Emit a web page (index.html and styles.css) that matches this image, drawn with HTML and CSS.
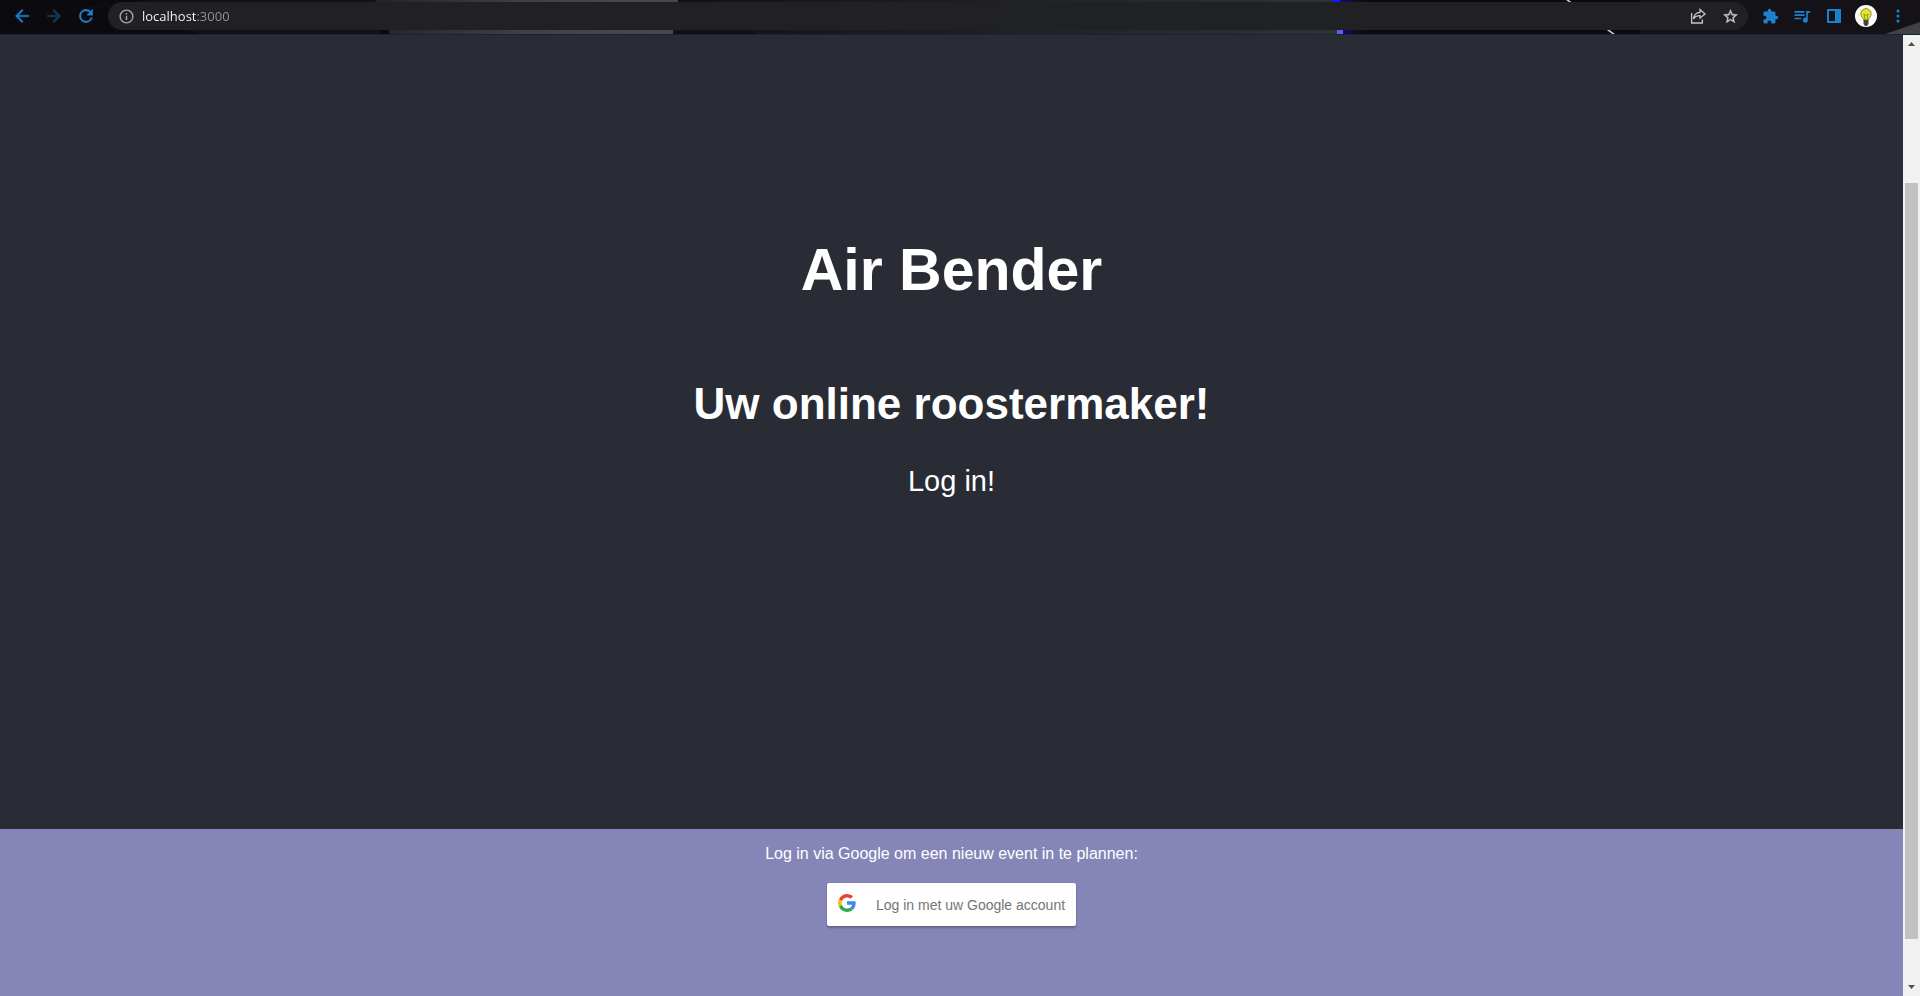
FILE: index.html
```html
<!DOCTYPE html>
<html lang="nl">
<head>
<meta charset="utf-8">
<title>Air Bender</title>
<link rel="stylesheet" href="styles.css">
</head>
<body>
<header class="toolbar">
  <svg class="toolbar-art" viewBox="0 0 1920 34" preserveAspectRatio="none" aria-hidden="true">
    <defs>
      <linearGradient id="left-fade"><stop offset="0" stop-color="#242326"/><stop offset=".5" stop-color="#414141"/><stop offset="1" stop-color="#4a4a4a"/></linearGradient>
      <linearGradient id="mid-fade"><stop offset="0" stop-color="#151517"/><stop offset=".3" stop-color="#1b1b1d"/><stop offset="1" stop-color="#303234"/></linearGradient>
      <linearGradient id="glow"><stop offset="0" stop-color="#1c0a70"/><stop offset="1" stop-color="#0d0c12"/></linearGradient>
    </defs>
    <path fill="#0d0a0d" d="M0 0h1920v34H0z"/>
    <path fill="#151013" d="M0 20 150 0h230v34H200L110 4z"/>
    <path fill="url(#left-fade)" d="M375 0h303l-5 34H390z"/>
    <path fill="#111113" d="M678 0h36l43 34h-84z"/>
    <path fill="url(#mid-fade)" d="M714 0h618l6 34H757z"/>
    <path fill="url(#glow)" d="M1338 0h24v34h-24z"/>
    <path fill="#1717f0" d="M1332 0h8v3h-8z"/>
    <path fill="#5c63e8" d="M1337 29h6v5h-6z"/>
    <path stroke="#d8d8d8" stroke-width="1.5" d="m1566-1 49 36"/>
    <path fill="#141217" d="M1640 0h280v34h-280z"/>
    <path fill="#414043" d="m1885 34 35-12v12z"/>
  </svg>
  <nav class="buttons" aria-label="Navigatie">
    <button class="tool" aria-label="Terug"><svg class="icon icon-bold" viewBox="0 0 24 24"><path d="M20 11H7.830l5.590-5.590L12 4l-8 8 8 8 1.410-1.410L7.830 13H20v-2z"/></svg></button>
    <button class="tool tool-dim" aria-label="Vooruit"><svg class="icon icon-bold" viewBox="0 0 24 24"><path d="m12 4-1.410 1.410L16.170 11H4v2h12.170l-5.580 5.590L12 20l8-8z"/></svg></button>
    <button class="tool" aria-label="Vernieuwen"><svg class="icon icon-bold" viewBox="0 0 24 24"><path d="M17.650 6.350C16.200 4.900 14.210 4 12 4a8 8 0 1 0 7.730 10h-2.080A6 6 0 1 1 12 6c1.660 0 3.140.690 4.220 1.780L13 11h7V4l-2.350 2.350z"/></svg></button>
  </nav>
  <div class="address">
    <button class="mini" aria-label="Site-informatie"><svg class="icon-small" viewBox="0 0 24 24"><path d="M11 7h2v2h-2zm0 4h2v6h-2zm1-9a10 10 0 1 0 0 20 10 10 0 0 0 0-20zm0 18a8 8 0 1 1 0-16 8 8 0 0 1 0 16z"/></svg></button>
    <input class="url" type="text" value="localhost:3000" aria-label="Adres" spellcheck="false">
    <button class="tool tool-light" aria-label="Delen"><svg class="icon" viewBox="0 0 20 20"><path fill="none" stroke="currentColor" stroke-width="1.300" d="M3.600 7v10h10.800v-3.500M5.500 13c.5-4.500 3-6.600 6.500-6.700V3.500L17 8l-5 4.200V9.700c-3-.1-5 .8-6.500 3.300z"/></svg></button>
    <button class="tool tool-light" aria-label="Bladwijzer"><svg class="icon-small icon-bold" viewBox="0 0 24 24"><path d="m22 9.240-7.190-.620L12 2 9.190 8.630 2 9.240l5.460 4.730L5.820 21 12 17.270 18.180 21l-1.630-7.030L22 9.240zM12 15.400l-3.760 2.270 1-4.280-3.320-2.880 4.380-.380L12 6.100l1.710 4.040 4.380.380-3.320 2.880 1 4.280L12 15.400z"/></svg></button>
  </div>
  <div class="buttons">
    <button class="tool" aria-label="Extensies"><svg class="icon-small" viewBox="0 0 24 24"><path d="M20.500 11H19V7a2 2 0 0 0-2-2h-4V3.500a2.500 2.500 0 0 0-5 0V5H4a2 2 0 0 0-2 2v3.800h1.500a2.700 2.700 0 0 1 0 5.400H2V20a2 2 0 0 0 2 2h3.800v-1.500a2.700 2.700 0 0 1 5.400 0V22H17a2 2 0 0 0 2-2v-4h1.500a2.500 2.500 0 0 0 0-5z"/></svg></button>
    <button class="tool" aria-label="Mediabediening"><svg class="icon" viewBox="0 0 24 24"><path d="M15 6H3v2h12V6zm0 4H3v2h12v-2zM3 16h8v-2H3v2zM17 6v8.180A3 3 0 1 0 19 17V8h3V6h-5z"/></svg></button>
    <button class="tool" aria-label="Zijvenster"><svg class="icon" viewBox="0 0 20 20"><path fill-rule="evenodd" d="M3 3h14v14H3zm2 2v10h6V5z"/></svg></button>
    <button class="tool" aria-label="Profiel"><svg class="avatar" viewBox="0 0 22 22">
      <circle cx="11" cy="11" r="11" fill="#fff"/>
      <path fill="none" stroke="#f0ea9a" stroke-width="1" d="M11 1v2M4 4l2 2m12-2-2 2M2 10h2.500m13 0H20M4 16l2-2m12 2-2-2"/>
      <path fill="#dfe62b" stroke="#77791c" stroke-width=".8" d="M8.500 15c0-2-2.700-3.300-2.700-6.200a5.200 5.200 0 0 1 10.400 0c0 2.900-2.700 4.200-2.700 6.200z"/>
      <path fill="none" stroke="#85841b" stroke-width=".8" d="m10 15-1-6 2 1.500L13 9l-1 6"/>
      <path fill="#45443c" d="M8.500 15h5v4l-1.500 2h-2l-1.500-2z"/>
    </svg></button>
    <button class="tool" aria-label="Menu"><svg class="icon" viewBox="0 0 20 20"><circle cx="10" cy="5" r="1.600"/><circle cx="10" cy="10" r="1.600"/><circle cx="10" cy="15" r="1.600"/></svg></button>
  </div>
</header>
<div class="viewport">
  <main class="page">
    <section class="hero">
      <h1 class="title">Air Bender</h1>
      <h2 class="subtitle">Uw online roostermaker!</h2>
      <p class="lead">Log in!</p>
    </section>
    <section class="login">
      <p class="prompt">Log in via Google om een nieuw event in te plannen:</p>
      <button class="google">
        <svg class="google-logo" viewBox="0 0 18 18" aria-hidden="true">
          <path fill="#EA4335" d="M9 3.480c1.690 0 2.830.730 3.480 1.340l2.540-2.480C13.460.890 11.430 0 9 0 5.480 0 2.440 2.020.960 4.960l2.910 2.260C4.600 5.050 6.620 3.480 9 3.480z"/>
          <path fill="#4285F4" d="M17.640 9.200c0-.740-.060-1.280-.190-1.840H9v3.340h4.960c-.100.830-.640 2.080-1.840 2.920l2.840 2.200c1.700-1.570 2.680-3.880 2.680-6.620z"/>
          <path fill="#FBBC05" d="M3.880 10.780A5.540 5.540 0 0 1 3.580 9c0-.620.110-1.220.290-1.780L.960 4.960A9 9 0 0 0 0 9c0 1.450.350 2.820.960 4.040z"/>
          <path fill="#34A853" d="M9 18c2.430 0 4.470-.800 5.960-2.180l-2.840-2.200c-.760.530-1.780.900-3.120.900-2.380 0-4.400-1.570-5.120-3.740L.970 13.040C2.450 15.980 5.480 18 9 18z"/>
        </svg>
        <span>Log in met uw Google account</span>
      </button>
    </section>
  </main>
  <div class="scrollbar" aria-hidden="true">
    <svg class="scroll-arrow" viewBox="0 0 17 17"><path d="M5 11h7L8.500 7z"/></svg>
    <div class="track"><div class="thumb"></div></div>
    <svg class="scroll-arrow" viewBox="0 0 17 17"><path d="M5 6h7l-3.500 4z"/></svg>
  </div>
</div>
</body>
</html>
```
FILE: styles.css
```css
* {
  box-sizing: border-box;
}

body {
  display: flex;
  flex-direction: column;
  height: 100vh;
  margin: 0;
  overflow: hidden;
  background: #292c34;
  color: #fff;
  font-family: "Liberation Sans", Arial, sans-serif;
}

button {
  border: 0;
  padding: 0;
  background: none;
  font-family: inherit;
  cursor: pointer;
}

svg {
  display: block;
  fill: currentColor;
}

/* Browser toolbar */
.toolbar {
  position: relative;
  display: flex;
  align-items: flex-start;
  gap: 6px;
  height: 35px;
  padding: 2px 6px 0;
  border-bottom: 1px solid #0d2a38;
  background: #0d0a0d;
}

.toolbar-art {
  position: absolute;
  inset: 0;
  width: 100%;
  height: 100%;
}

.buttons,
.address {
  position: relative;
  display: flex;
  align-items: center;
  height: 28px;
}

.address {
  flex: 1;
  padding: 0 2px 0 8px;
  border-radius: 14px;
  background: #202124;
}

.tool,
.mini {
  display: grid;
  place-items: center;
  width: 32px;
  height: 28px;
  color: #1c80ca;
}

.mini {
  width: 20px;
  color: #a5a7aa;
}

.tool-dim {
  color: #163c5b;
}

.tool-light {
  color: #c4c6c9;
}

.icon {
  width: 20px;
  height: 20px;
}

.icon-small {
  width: 17px;
  height: 17px;
}

.icon-bold {
  stroke: currentColor;
  stroke-width: 0.5;
}

.avatar {
  width: 22px;
  height: 22px;
}

.url {
  flex: 1;
  min-width: 0;
  height: 28px;
  margin-left: 6px;
  border: 0;
  padding: 0;
  outline: 0;
  background: linear-gradient(to right, #fff 55px, #909397 55px);
  background-clip: text;
  -webkit-background-clip: text;
  -webkit-text-fill-color: transparent;
  color: #fff;
  font-family: "Open Sans", "Noto Sans", sans-serif;
  font-size: 13px;
}

/* Page */
.viewport {
  display: flex;
  flex: 1;
  min-height: 0;
}

.page {
  display: flex;
  flex: 1;
  flex-direction: column;
}

.hero {
  display: flex;
  flex: 1;
  flex-direction: column;
  align-items: center;
  justify-content: center;
  padding-bottom: 130px;
  font-size: 29px;
  text-align: center;
}

.title {
  margin: 0 0 75px;
  font-size: 59px;
}

.subtitle {
  margin: 0 0 36px;
  font-size: 44px;
}

.lead {
  margin: 0;
}

.login {
  display: flex;
  flex-direction: column;
  align-items: center;
  gap: 20px;
  padding: 16px 16px 70px;
  background: #8585b8;
}

.prompt {
  margin: 0;
  font-size: 16px;
}

.google {
  display: flex;
  align-items: flex-start;
  gap: 20px;
  padding: 11px 11px 10px;
  border-radius: 2px;
  background: #fff;
  color: #757575;
  font-size: 14px;
  line-height: 22px;
  box-shadow: 0 2px 2px rgba(0, 0, 0, 0.24), 0 0 1px rgba(0, 0, 0, 0.24);
}

.google-logo {
  width: 18px;
  height: 18px;
}

/* Scrollbar */
.scrollbar {
  display: flex;
  flex-direction: column;
  width: 17px;
  background: #f1f1f1;
}

.scroll-arrow {
  width: 17px;
  height: 17px;
  fill: #505050;
}

.track {
  display: grid;
  flex: 1;
  grid-template-rows: 131fr 756fr 40fr;
  padding: 0 2px;
}

.thumb {
  grid-row: 2;
  background: #c1c1c1;
}
```
